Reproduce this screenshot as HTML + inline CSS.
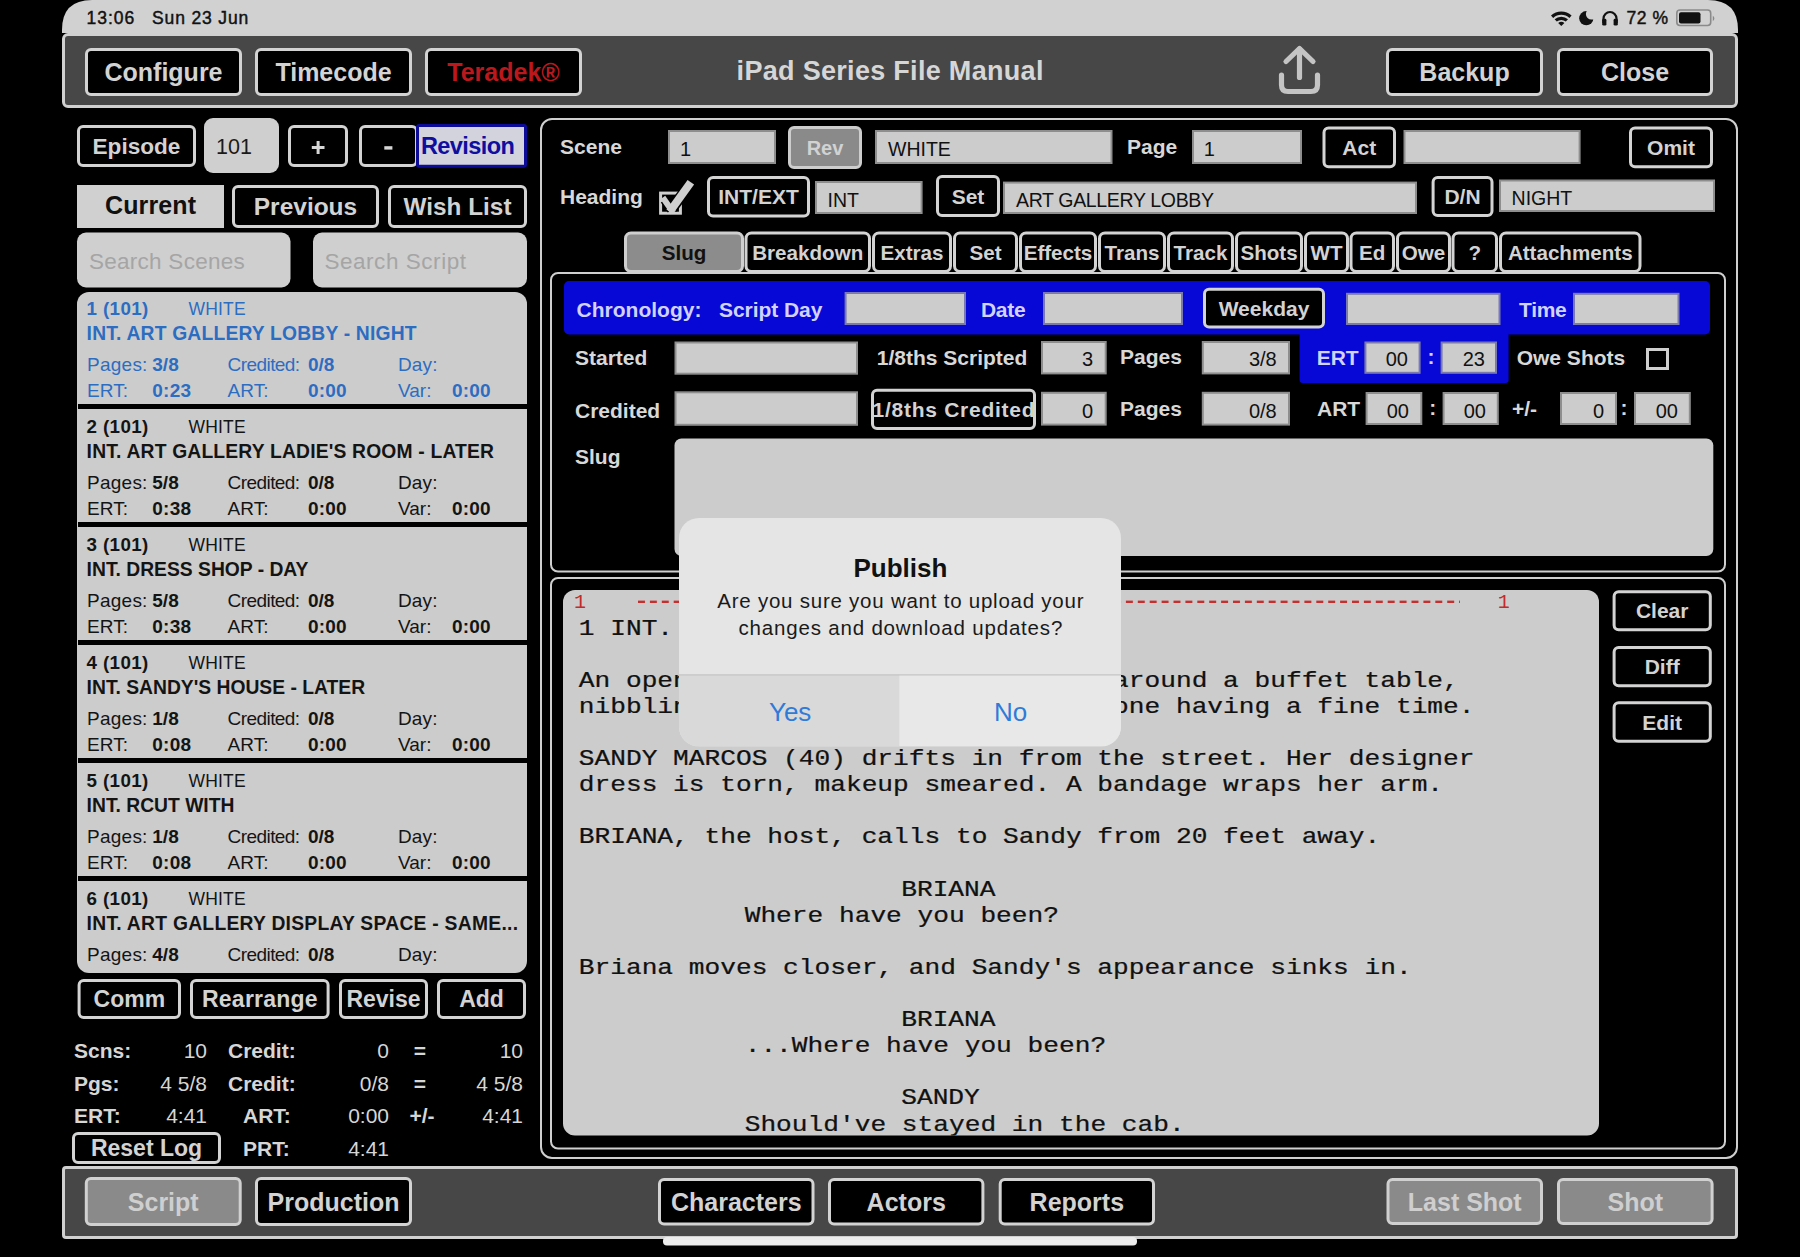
<!DOCTYPE html>
<html><head><meta charset="utf-8"><title>iPad Series File Manual</title>
<style>html,body{margin:0;padding:0;background:#000;width:1800px;height:1257px;overflow:hidden}svg{display:block}</style>
</head><body>
<svg width="1800" height="1257" viewBox="0 0 1800 1257"><defs><pattern id="dash" x="638" y="0" width="11.9" height="10" patternUnits="userSpaceOnUse"><rect x="0" y="0" width="7" height="10" fill="#c43030"/></pattern></defs><path d="M62,33 L62,30 Q62,0 92,0 L1708,0 Q1738,0 1738,30 L1738,33 Z" fill="#d1d1d1"/>
<text x="86.50" y="23.90" font-family="Liberation Sans" font-size="17.5" font-weight="400" fill="#111" text-anchor="start" textLength="47.70" lengthAdjust="spacing" stroke="#111" stroke-width="0.45">13:06</text>
<text x="152.00" y="23.90" font-family="Liberation Sans" font-size="17.5" font-weight="400" fill="#111" text-anchor="start" textLength="96.30" lengthAdjust="spacing" stroke="#111" stroke-width="0.45">Sun 23 Jun</text>
<g fill="#111"><path d="M1551,15.5 A15,15 0 0 1 1571.6,15.5 L1569.4,17.9 A12,12 0 0 0 1553.2,17.9 Z"/><path d="M1554.6,19.3 A10,10 0 0 1 1568,19.3 L1565.8,21.6 A7,7 0 0 0 1556.8,21.6 Z"/><path d="M1558.2,23 A5,5 0 0 1 1564.4,23 L1561.3,26 Z"/></g>
<mask id="moonm"><rect x="1570" y="0" width="40" height="33" fill="#fff"/><circle cx="1591.5" cy="14" r="5.6" fill="#000"/></mask><circle cx="1586.3" cy="18.2" r="7.1" fill="#111" mask="url(#moonm)"/>
<path d="M1603.5,23 L1603.5,18.5 A6.5,6.5 0 0 1 1616.5,18.5 L1616.5,23" fill="none" stroke="#111" stroke-width="2.2"/><rect x="1602.2" y="18.8" width="4.2" height="6.8" rx="1.4" fill="#111"/><rect x="1613.6" y="18.8" width="4.2" height="6.8" rx="1.4" fill="#111"/>
<text x="1626.60" y="23.50" font-family="Liberation Sans" font-size="17.5" font-weight="400" fill="#111" text-anchor="start" textLength="41.40" lengthAdjust="spacing" stroke="#111" stroke-width="0.45">72 %</text>
<rect x="1676.80" y="10.00" width="33.90" height="15.50" rx="3.20" fill="none" stroke="#8a8a8a" stroke-width="1.6" />
<rect x="1679.00" y="12.20" width="21.50" height="11.30" rx="2" fill="#111" />
<path d="M1712.8,15.8 Q1716,18.5 1712.8,21.2 Z" fill="#888"/>
<rect x="63.50" y="34.50" width="1673.00" height="72.00" rx="4.50" fill="#474747" stroke="#d0d0d0" stroke-width="3" />
<rect x="86.50" y="49.50" width="154.00" height="45.00" rx="4.50" fill="#000" stroke="#d3d3d3" stroke-width="3" />
<text x="163.50" y="81.00" font-family="Liberation Sans" font-size="25" font-weight="700" fill="#d3d3d3" text-anchor="middle" >Configure</text>
<rect x="256.50" y="49.50" width="154.00" height="45.00" rx="4.50" fill="#000" stroke="#d3d3d3" stroke-width="3" />
<text x="333.50" y="81.00" font-family="Liberation Sans" font-size="25" font-weight="700" fill="#d3d3d3" text-anchor="middle" >Timecode</text>
<rect x="426.50" y="49.50" width="154.00" height="45.00" rx="4.50" fill="#000" stroke="#d3d3d3" stroke-width="3" />
<text x="503.50" y="81.00" font-family="Liberation Sans" font-size="25" font-weight="700" fill="#bb181d" text-anchor="middle" >Teradek®</text>
<text x="736.60" y="80.00" font-family="Liberation Sans" font-size="27" font-weight="700" fill="#d6d6d6" text-anchor="start" textLength="306.80" lengthAdjust="spacing" >iPad Series File Manual</text>
<g fill="none" stroke="#c4c4c4" stroke-width="5.2" stroke-linecap="round" stroke-linejoin="round"><path d="M1299.5,49 L1299.5,77.5"/><path d="M1286,61.5 L1299.5,48.5 L1313,61.5"/><path d="M1281.5,75 L1281.5,85 Q1281.5,91.5 1288,91.5 L1311,91.5 Q1317.5,91.5 1317.5,85 L1317.5,75"/></g>
<rect x="1387.50" y="49.50" width="154.00" height="45.00" rx="4.50" fill="#000" stroke="#d3d3d3" stroke-width="3" />
<text x="1464.50" y="81.00" font-family="Liberation Sans" font-size="25" font-weight="700" fill="#d3d3d3" text-anchor="middle" >Backup</text>
<rect x="1558.50" y="49.50" width="153.00" height="45.00" rx="4.50" fill="#000" stroke="#d3d3d3" stroke-width="3" />
<text x="1635.00" y="81.00" font-family="Liberation Sans" font-size="25" font-weight="700" fill="#d3d3d3" text-anchor="middle" >Close</text>
<rect x="78.50" y="126.50" width="116.00" height="39.00" rx="4.50" fill="#000" stroke="#d3d3d3" stroke-width="3" />
<text x="136.50" y="154.14" font-family="Liberation Sans" font-size="22.6" font-weight="700" fill="#d3d3d3" text-anchor="middle" >Episode</text>
<rect x="204.00" y="118.00" width="75.00" height="55.00" rx="9" fill="#cfcfcf" />
<text x="216.00" y="154.30" font-family="Liberation Sans" font-size="21.5" font-weight="400" fill="#1a1a1a" text-anchor="start" >101</text>
<rect x="289.50" y="126.50" width="57.00" height="39.00" rx="4.50" fill="#000" stroke="#d3d3d3" stroke-width="3" />
<rect x="311.80" y="146.00" width="12.70" height="3.00" rx="0" fill="#d6d6d6" />
<rect x="316.60" y="141.00" width="3.00" height="13.00" rx="0" fill="#d6d6d6" />
<rect x="360.50" y="126.50" width="56.00" height="39.00" rx="4.50" fill="#000" stroke="#d3d3d3" stroke-width="3" />
<rect x="384.30" y="146.20" width="8.10" height="3.40" rx="0" fill="#d6d6d6" />
<rect x="417.50" y="125.50" width="108.00" height="40.70" rx="1.50" fill="#d3d3de" stroke="#0c0c98" stroke-width="3" />
<text x="420.90" y="154.00" font-family="Liberation Sans" font-size="23.5" font-weight="700" fill="#0e0ea0" text-anchor="start" textLength="94.00" lengthAdjust="spacing" >Revision</text>
<rect x="77.00" y="185.00" width="147.00" height="43.00" rx="0" fill="#d0d0d0" />
<text x="150.50" y="214.00" font-family="Liberation Sans" font-size="25" font-weight="700" fill="#111" text-anchor="middle" textLength="91.00" lengthAdjust="spacing" >Current</text>
<rect x="233.50" y="186.50" width="144.00" height="40.00" rx="4.50" fill="#000" stroke="#d3d3d3" stroke-width="3" />
<text x="305.50" y="215.32" font-family="Liberation Sans" font-size="24.5" font-weight="700" fill="#d3d3d3" text-anchor="middle" textLength="103.40" lengthAdjust="spacing" >Previous</text>
<rect x="389.50" y="186.50" width="136.00" height="40.00" rx="4.50" fill="#000" stroke="#d3d3d3" stroke-width="3" />
<text x="457.50" y="215.25" font-family="Liberation Sans" font-size="24.3" font-weight="700" fill="#d3d3d3" text-anchor="middle" textLength="108.00" lengthAdjust="spacing" >Wish List</text>
<rect x="77.00" y="232.50" width="213.50" height="55.00" rx="9" fill="#cfcfcf" />
<text x="89.00" y="268.60" font-family="Liberation Sans" font-size="22.5" font-weight="400" fill="#a5a5a5" text-anchor="start" textLength="155.70" lengthAdjust="spacing" >Search Scenes</text>
<rect x="313.00" y="232.50" width="214.00" height="55.00" rx="9" fill="#cfcfcf" />
<text x="324.40" y="268.60" font-family="Liberation Sans" font-size="22.5" font-weight="400" fill="#a5a5a5" text-anchor="start" textLength="141.60" lengthAdjust="spacing" >Search Script</text>
<clipPath id="listclip"><rect x="77" y="292" width="450" height="681" rx="12"/></clipPath>
<rect x="77.00" y="292.00" width="450.00" height="681.00" rx="12" fill="#cccccc" />
<g clip-path="url(#listclip)">
<text x="86.60" y="314.80" font-family="Liberation Sans" font-size="18.8" font-weight="700" fill="#2c6dc2" text-anchor="start" textLength="61.70" lengthAdjust="spacing" >1 (101)</text>
<text x="188.40" y="314.50" font-family="Liberation Sans" font-size="17.5" font-weight="400" fill="#2c6dc2" text-anchor="start" textLength="57.30" lengthAdjust="spacing" >WHITE</text>
<text x="86.60" y="340.00" font-family="Liberation Sans" font-size="19.3" font-weight="700" fill="#2c6dc2" text-anchor="start" textLength="330.00" lengthAdjust="spacing" >INT. ART GALLERY LOBBY - NIGHT</text>
<text x="87.00" y="371.00" font-family="Liberation Sans" font-size="19" font-weight="400" fill="#2c6dc2" text-anchor="start" textLength="60.40" lengthAdjust="spacing" >Pages:</text>
<text x="152.30" y="371.00" font-family="Liberation Sans" font-size="19" font-weight="700" fill="#2c6dc2" text-anchor="start" >3/8</text>
<text x="227.60" y="371.00" font-family="Liberation Sans" font-size="19" font-weight="400" fill="#2c6dc2" text-anchor="start" textLength="72.50" lengthAdjust="spacing" >Credited:</text>
<text x="308.00" y="371.00" font-family="Liberation Sans" font-size="19" font-weight="700" fill="#2c6dc2" text-anchor="start" >0/8</text>
<text x="398.00" y="371.00" font-family="Liberation Sans" font-size="19" font-weight="400" fill="#2c6dc2" text-anchor="start" textLength="39.50" lengthAdjust="spacing" >Day:</text>
<text x="87.00" y="396.50" font-family="Liberation Sans" font-size="19" font-weight="400" fill="#2c6dc2" text-anchor="start" textLength="41.00" lengthAdjust="spacing" >ERT:</text>
<text x="152.30" y="396.50" font-family="Liberation Sans" font-size="19" font-weight="700" fill="#2c6dc2" text-anchor="start" textLength="38.70" lengthAdjust="spacing" >0:23</text>
<text x="227.60" y="396.50" font-family="Liberation Sans" font-size="19" font-weight="400" fill="#2c6dc2" text-anchor="start" >ART:</text>
<text x="308.00" y="396.50" font-family="Liberation Sans" font-size="19" font-weight="700" fill="#2c6dc2" text-anchor="start" textLength="38.70" lengthAdjust="spacing" >0:00</text>
<text x="398.00" y="396.50" font-family="Liberation Sans" font-size="19" font-weight="400" fill="#2c6dc2" text-anchor="start" >Var:</text>
<text x="452.00" y="396.50" font-family="Liberation Sans" font-size="19" font-weight="700" fill="#2c6dc2" text-anchor="start" textLength="38.70" lengthAdjust="spacing" >0:00</text>
<rect x="78.00" y="404.00" width="449.00" height="5.00" rx="0" fill="#000" />
<text x="86.60" y="432.80" font-family="Liberation Sans" font-size="18.8" font-weight="700" fill="#141414" text-anchor="start" textLength="61.70" lengthAdjust="spacing" >2 (101)</text>
<text x="188.40" y="432.50" font-family="Liberation Sans" font-size="17.5" font-weight="400" fill="#141414" text-anchor="start" textLength="57.30" lengthAdjust="spacing" >WHITE</text>
<text x="86.60" y="458.00" font-family="Liberation Sans" font-size="19.3" font-weight="700" fill="#141414" text-anchor="start" textLength="407.40" lengthAdjust="spacing" >INT. ART GALLERY LADIE&#x27;S ROOM - LATER</text>
<text x="87.00" y="489.00" font-family="Liberation Sans" font-size="19" font-weight="400" fill="#141414" text-anchor="start" textLength="60.40" lengthAdjust="spacing" >Pages:</text>
<text x="152.30" y="489.00" font-family="Liberation Sans" font-size="19" font-weight="700" fill="#141414" text-anchor="start" >5/8</text>
<text x="227.60" y="489.00" font-family="Liberation Sans" font-size="19" font-weight="400" fill="#141414" text-anchor="start" textLength="72.50" lengthAdjust="spacing" >Credited:</text>
<text x="308.00" y="489.00" font-family="Liberation Sans" font-size="19" font-weight="700" fill="#141414" text-anchor="start" >0/8</text>
<text x="398.00" y="489.00" font-family="Liberation Sans" font-size="19" font-weight="400" fill="#141414" text-anchor="start" textLength="39.50" lengthAdjust="spacing" >Day:</text>
<text x="87.00" y="514.50" font-family="Liberation Sans" font-size="19" font-weight="400" fill="#141414" text-anchor="start" textLength="41.00" lengthAdjust="spacing" >ERT:</text>
<text x="152.30" y="514.50" font-family="Liberation Sans" font-size="19" font-weight="700" fill="#141414" text-anchor="start" textLength="38.70" lengthAdjust="spacing" >0:38</text>
<text x="227.60" y="514.50" font-family="Liberation Sans" font-size="19" font-weight="400" fill="#141414" text-anchor="start" >ART:</text>
<text x="308.00" y="514.50" font-family="Liberation Sans" font-size="19" font-weight="700" fill="#141414" text-anchor="start" textLength="38.70" lengthAdjust="spacing" >0:00</text>
<text x="398.00" y="514.50" font-family="Liberation Sans" font-size="19" font-weight="400" fill="#141414" text-anchor="start" >Var:</text>
<text x="452.00" y="514.50" font-family="Liberation Sans" font-size="19" font-weight="700" fill="#141414" text-anchor="start" textLength="38.70" lengthAdjust="spacing" >0:00</text>
<rect x="78.00" y="522.00" width="449.00" height="5.00" rx="0" fill="#000" />
<text x="86.60" y="550.80" font-family="Liberation Sans" font-size="18.8" font-weight="700" fill="#141414" text-anchor="start" textLength="61.70" lengthAdjust="spacing" >3 (101)</text>
<text x="188.40" y="550.50" font-family="Liberation Sans" font-size="17.5" font-weight="400" fill="#141414" text-anchor="start" textLength="57.30" lengthAdjust="spacing" >WHITE</text>
<text x="86.60" y="576.00" font-family="Liberation Sans" font-size="19.3" font-weight="700" fill="#141414" text-anchor="start" >INT. DRESS SHOP - DAY</text>
<text x="87.00" y="607.00" font-family="Liberation Sans" font-size="19" font-weight="400" fill="#141414" text-anchor="start" textLength="60.40" lengthAdjust="spacing" >Pages:</text>
<text x="152.30" y="607.00" font-family="Liberation Sans" font-size="19" font-weight="700" fill="#141414" text-anchor="start" >5/8</text>
<text x="227.60" y="607.00" font-family="Liberation Sans" font-size="19" font-weight="400" fill="#141414" text-anchor="start" textLength="72.50" lengthAdjust="spacing" >Credited:</text>
<text x="308.00" y="607.00" font-family="Liberation Sans" font-size="19" font-weight="700" fill="#141414" text-anchor="start" >0/8</text>
<text x="398.00" y="607.00" font-family="Liberation Sans" font-size="19" font-weight="400" fill="#141414" text-anchor="start" textLength="39.50" lengthAdjust="spacing" >Day:</text>
<text x="87.00" y="632.50" font-family="Liberation Sans" font-size="19" font-weight="400" fill="#141414" text-anchor="start" textLength="41.00" lengthAdjust="spacing" >ERT:</text>
<text x="152.30" y="632.50" font-family="Liberation Sans" font-size="19" font-weight="700" fill="#141414" text-anchor="start" textLength="38.70" lengthAdjust="spacing" >0:38</text>
<text x="227.60" y="632.50" font-family="Liberation Sans" font-size="19" font-weight="400" fill="#141414" text-anchor="start" >ART:</text>
<text x="308.00" y="632.50" font-family="Liberation Sans" font-size="19" font-weight="700" fill="#141414" text-anchor="start" textLength="38.70" lengthAdjust="spacing" >0:00</text>
<text x="398.00" y="632.50" font-family="Liberation Sans" font-size="19" font-weight="400" fill="#141414" text-anchor="start" >Var:</text>
<text x="452.00" y="632.50" font-family="Liberation Sans" font-size="19" font-weight="700" fill="#141414" text-anchor="start" textLength="38.70" lengthAdjust="spacing" >0:00</text>
<rect x="78.00" y="640.00" width="449.00" height="5.00" rx="0" fill="#000" />
<text x="86.60" y="668.80" font-family="Liberation Sans" font-size="18.8" font-weight="700" fill="#141414" text-anchor="start" textLength="61.70" lengthAdjust="spacing" >4 (101)</text>
<text x="188.40" y="668.50" font-family="Liberation Sans" font-size="17.5" font-weight="400" fill="#141414" text-anchor="start" textLength="57.30" lengthAdjust="spacing" >WHITE</text>
<text x="86.60" y="694.00" font-family="Liberation Sans" font-size="19.3" font-weight="700" fill="#141414" text-anchor="start" >INT. SANDY&#x27;S HOUSE - LATER</text>
<text x="87.00" y="725.00" font-family="Liberation Sans" font-size="19" font-weight="400" fill="#141414" text-anchor="start" textLength="60.40" lengthAdjust="spacing" >Pages:</text>
<text x="152.30" y="725.00" font-family="Liberation Sans" font-size="19" font-weight="700" fill="#141414" text-anchor="start" >1/8</text>
<text x="227.60" y="725.00" font-family="Liberation Sans" font-size="19" font-weight="400" fill="#141414" text-anchor="start" textLength="72.50" lengthAdjust="spacing" >Credited:</text>
<text x="308.00" y="725.00" font-family="Liberation Sans" font-size="19" font-weight="700" fill="#141414" text-anchor="start" >0/8</text>
<text x="398.00" y="725.00" font-family="Liberation Sans" font-size="19" font-weight="400" fill="#141414" text-anchor="start" textLength="39.50" lengthAdjust="spacing" >Day:</text>
<text x="87.00" y="750.50" font-family="Liberation Sans" font-size="19" font-weight="400" fill="#141414" text-anchor="start" textLength="41.00" lengthAdjust="spacing" >ERT:</text>
<text x="152.30" y="750.50" font-family="Liberation Sans" font-size="19" font-weight="700" fill="#141414" text-anchor="start" textLength="38.70" lengthAdjust="spacing" >0:08</text>
<text x="227.60" y="750.50" font-family="Liberation Sans" font-size="19" font-weight="400" fill="#141414" text-anchor="start" >ART:</text>
<text x="308.00" y="750.50" font-family="Liberation Sans" font-size="19" font-weight="700" fill="#141414" text-anchor="start" textLength="38.70" lengthAdjust="spacing" >0:00</text>
<text x="398.00" y="750.50" font-family="Liberation Sans" font-size="19" font-weight="400" fill="#141414" text-anchor="start" >Var:</text>
<text x="452.00" y="750.50" font-family="Liberation Sans" font-size="19" font-weight="700" fill="#141414" text-anchor="start" textLength="38.70" lengthAdjust="spacing" >0:00</text>
<rect x="78.00" y="758.00" width="449.00" height="5.00" rx="0" fill="#000" />
<text x="86.60" y="786.80" font-family="Liberation Sans" font-size="18.8" font-weight="700" fill="#141414" text-anchor="start" textLength="61.70" lengthAdjust="spacing" >5 (101)</text>
<text x="188.40" y="786.50" font-family="Liberation Sans" font-size="17.5" font-weight="400" fill="#141414" text-anchor="start" textLength="57.30" lengthAdjust="spacing" >WHITE</text>
<text x="86.60" y="812.00" font-family="Liberation Sans" font-size="19.3" font-weight="700" fill="#141414" text-anchor="start" >INT. RCUT WITH</text>
<text x="87.00" y="843.00" font-family="Liberation Sans" font-size="19" font-weight="400" fill="#141414" text-anchor="start" textLength="60.40" lengthAdjust="spacing" >Pages:</text>
<text x="152.30" y="843.00" font-family="Liberation Sans" font-size="19" font-weight="700" fill="#141414" text-anchor="start" >1/8</text>
<text x="227.60" y="843.00" font-family="Liberation Sans" font-size="19" font-weight="400" fill="#141414" text-anchor="start" textLength="72.50" lengthAdjust="spacing" >Credited:</text>
<text x="308.00" y="843.00" font-family="Liberation Sans" font-size="19" font-weight="700" fill="#141414" text-anchor="start" >0/8</text>
<text x="398.00" y="843.00" font-family="Liberation Sans" font-size="19" font-weight="400" fill="#141414" text-anchor="start" textLength="39.50" lengthAdjust="spacing" >Day:</text>
<text x="87.00" y="868.50" font-family="Liberation Sans" font-size="19" font-weight="400" fill="#141414" text-anchor="start" textLength="41.00" lengthAdjust="spacing" >ERT:</text>
<text x="152.30" y="868.50" font-family="Liberation Sans" font-size="19" font-weight="700" fill="#141414" text-anchor="start" textLength="38.70" lengthAdjust="spacing" >0:08</text>
<text x="227.60" y="868.50" font-family="Liberation Sans" font-size="19" font-weight="400" fill="#141414" text-anchor="start" >ART:</text>
<text x="308.00" y="868.50" font-family="Liberation Sans" font-size="19" font-weight="700" fill="#141414" text-anchor="start" textLength="38.70" lengthAdjust="spacing" >0:00</text>
<text x="398.00" y="868.50" font-family="Liberation Sans" font-size="19" font-weight="400" fill="#141414" text-anchor="start" >Var:</text>
<text x="452.00" y="868.50" font-family="Liberation Sans" font-size="19" font-weight="700" fill="#141414" text-anchor="start" textLength="38.70" lengthAdjust="spacing" >0:00</text>
<rect x="78.00" y="876.00" width="449.00" height="5.00" rx="0" fill="#000" />
<text x="86.60" y="904.80" font-family="Liberation Sans" font-size="18.8" font-weight="700" fill="#141414" text-anchor="start" textLength="61.70" lengthAdjust="spacing" >6 (101)</text>
<text x="188.40" y="904.50" font-family="Liberation Sans" font-size="17.5" font-weight="400" fill="#141414" text-anchor="start" textLength="57.30" lengthAdjust="spacing" >WHITE</text>
<text x="86.60" y="930.00" font-family="Liberation Sans" font-size="19.3" font-weight="700" fill="#141414" text-anchor="start" textLength="431.40" lengthAdjust="spacing" >INT. ART GALLERY DISPLAY SPACE - SAME...</text>
<text x="87.00" y="961.00" font-family="Liberation Sans" font-size="19" font-weight="400" fill="#141414" text-anchor="start" textLength="60.40" lengthAdjust="spacing" >Pages:</text>
<text x="152.30" y="961.00" font-family="Liberation Sans" font-size="19" font-weight="700" fill="#141414" text-anchor="start" >4/8</text>
<text x="227.60" y="961.00" font-family="Liberation Sans" font-size="19" font-weight="400" fill="#141414" text-anchor="start" textLength="72.50" lengthAdjust="spacing" >Credited:</text>
<text x="308.00" y="961.00" font-family="Liberation Sans" font-size="19" font-weight="700" fill="#141414" text-anchor="start" >0/8</text>
<text x="398.00" y="961.00" font-family="Liberation Sans" font-size="19" font-weight="400" fill="#141414" text-anchor="start" textLength="39.50" lengthAdjust="spacing" >Day:</text>
<text x="87.00" y="986.50" font-family="Liberation Sans" font-size="19" font-weight="400" fill="#141414" text-anchor="start" textLength="41.00" lengthAdjust="spacing" >ERT:</text>
<text x="152.30" y="986.50" font-family="Liberation Sans" font-size="19" font-weight="700" fill="#141414" text-anchor="start" textLength="38.70" lengthAdjust="spacing" >0:08</text>
<text x="227.60" y="986.50" font-family="Liberation Sans" font-size="19" font-weight="400" fill="#141414" text-anchor="start" >ART:</text>
<text x="308.00" y="986.50" font-family="Liberation Sans" font-size="19" font-weight="700" fill="#141414" text-anchor="start" textLength="38.70" lengthAdjust="spacing" >0:00</text>
<text x="398.00" y="986.50" font-family="Liberation Sans" font-size="19" font-weight="400" fill="#141414" text-anchor="start" >Var:</text>
<text x="452.00" y="986.50" font-family="Liberation Sans" font-size="19" font-weight="700" fill="#141414" text-anchor="start" textLength="38.70" lengthAdjust="spacing" >0:00</text>
</g>
<rect x="79.10" y="980.50" width="100.40" height="37.00" rx="4.50" fill="#000" stroke="#d3d3d3" stroke-width="3" />
<text x="129.30" y="1007.28" font-family="Liberation Sans" font-size="23" font-weight="700" fill="#d3d3d3" text-anchor="middle" >Comm</text>
<rect x="191.50" y="980.50" width="136.60" height="37.00" rx="4.50" fill="#000" stroke="#d3d3d3" stroke-width="3" />
<text x="259.80" y="1007.28" font-family="Liberation Sans" font-size="23" font-weight="700" fill="#d3d3d3" text-anchor="middle" textLength="115.60" lengthAdjust="spacing" >Rearrange</text>
<rect x="340.50" y="980.50" width="86.00" height="37.00" rx="4.50" fill="#000" stroke="#d3d3d3" stroke-width="3" />
<text x="383.50" y="1007.28" font-family="Liberation Sans" font-size="23" font-weight="700" fill="#d3d3d3" text-anchor="middle" >Revise</text>
<rect x="438.50" y="980.50" width="86.00" height="37.00" rx="4.50" fill="#000" stroke="#d3d3d3" stroke-width="3" />
<text x="481.50" y="1007.28" font-family="Liberation Sans" font-size="23" font-weight="700" fill="#d3d3d3" text-anchor="middle" >Add</text>
<text x="74.00" y="1058.00" font-family="Liberation Sans" font-size="21" font-weight="700" fill="#d6d6d6" text-anchor="start" >Scns:</text>
<text x="207.00" y="1058.00" font-family="Liberation Sans" font-size="21" font-weight="400" fill="#d6d6d6" text-anchor="end" >10</text>
<text x="228.00" y="1058.00" font-family="Liberation Sans" font-size="21" font-weight="700" fill="#d6d6d6" text-anchor="start" >Credit:</text>
<text x="389.00" y="1058.00" font-family="Liberation Sans" font-size="21" font-weight="400" fill="#d6d6d6" text-anchor="end" >0</text>
<text x="420.00" y="1058.00" font-family="Liberation Sans" font-size="21" font-weight="700" fill="#d6d6d6" text-anchor="middle" >=</text>
<text x="523.00" y="1058.00" font-family="Liberation Sans" font-size="21" font-weight="400" fill="#d6d6d6" text-anchor="end" >10</text>
<text x="74.00" y="1090.60" font-family="Liberation Sans" font-size="21" font-weight="700" fill="#d6d6d6" text-anchor="start" >Pgs:</text>
<text x="207.00" y="1090.60" font-family="Liberation Sans" font-size="21" font-weight="400" fill="#d6d6d6" text-anchor="end" >4 5/8</text>
<text x="228.00" y="1090.60" font-family="Liberation Sans" font-size="21" font-weight="700" fill="#d6d6d6" text-anchor="start" >Credit:</text>
<text x="389.00" y="1090.60" font-family="Liberation Sans" font-size="21" font-weight="400" fill="#d6d6d6" text-anchor="end" >0/8</text>
<text x="420.00" y="1090.60" font-family="Liberation Sans" font-size="21" font-weight="700" fill="#d6d6d6" text-anchor="middle" >=</text>
<text x="523.00" y="1090.60" font-family="Liberation Sans" font-size="21" font-weight="400" fill="#d6d6d6" text-anchor="end" >4 5/8</text>
<text x="74.00" y="1123.00" font-family="Liberation Sans" font-size="21" font-weight="700" fill="#d6d6d6" text-anchor="start" >ERT:</text>
<text x="207.00" y="1123.00" font-family="Liberation Sans" font-size="21" font-weight="400" fill="#d6d6d6" text-anchor="end" >4:41</text>
<text x="243.00" y="1123.00" font-family="Liberation Sans" font-size="21" font-weight="700" fill="#d6d6d6" text-anchor="start" >ART:</text>
<text x="389.00" y="1123.00" font-family="Liberation Sans" font-size="21" font-weight="400" fill="#d6d6d6" text-anchor="end" >0:00</text>
<text x="422.00" y="1123.00" font-family="Liberation Sans" font-size="21" font-weight="700" fill="#d6d6d6" text-anchor="middle" >+/-</text>
<text x="523.00" y="1123.00" font-family="Liberation Sans" font-size="21" font-weight="400" fill="#d6d6d6" text-anchor="end" >4:41</text>
<rect x="73.50" y="1133.50" width="146.00" height="29.00" rx="4.50" fill="#000" stroke="#d3d3d3" stroke-width="3" />
<text x="146.50" y="1156.28" font-family="Liberation Sans" font-size="23" font-weight="700" fill="#d3d3d3" text-anchor="middle" >Reset Log</text>
<text x="243.00" y="1156.00" font-family="Liberation Sans" font-size="21" font-weight="700" fill="#d6d6d6" text-anchor="start" >PRT:</text>
<text x="389.00" y="1156.00" font-family="Liberation Sans" font-size="21" font-weight="400" fill="#d6d6d6" text-anchor="end" >4:41</text>
<rect x="541.00" y="119.00" width="1196.00" height="1039.00" rx="11.00" fill="none" stroke="#cfcfcf" stroke-width="2" />
<text x="560.00" y="154.00" font-family="Liberation Sans" font-size="21" font-weight="700" fill="#d8d8d8" text-anchor="start" textLength="62.00" lengthAdjust="spacing" >Scene</text>
<rect x="669.00" y="131.00" width="106.00" height="32.00" rx="0.00" fill="#cccccc" stroke="#8e8e8e" stroke-width="2" />
<text x="680.00" y="156.00" font-family="Liberation Sans" font-size="20" font-weight="400" fill="#111" text-anchor="start" >1</text>
<rect x="789.50" y="127.50" width="71.00" height="40.00" rx="4.50" fill="#8a8a8a" stroke="#cdcdcd" stroke-width="3" />
<text x="825.00" y="154.70" font-family="Liberation Sans" font-size="20" font-weight="700" fill="#d2d2d2" text-anchor="middle" >Rev</text>
<rect x="876.00" y="131.00" width="235.50" height="32.00" rx="0.00" fill="#cccccc" stroke="#8e8e8e" stroke-width="2" />
<text x="888.00" y="156.00" font-family="Liberation Sans" font-size="19.5" font-weight="400" fill="#111" text-anchor="start" >WHITE</text>
<text x="1127.00" y="154.00" font-family="Liberation Sans" font-size="21" font-weight="700" fill="#d8d8d8" text-anchor="start" >Page</text>
<rect x="1193.00" y="131.00" width="108.00" height="32.00" rx="0.00" fill="#cccccc" stroke="#8e8e8e" stroke-width="2" />
<text x="1203.70" y="156.00" font-family="Liberation Sans" font-size="20" font-weight="400" fill="#111" text-anchor="start" >1</text>
<rect x="1324.00" y="128.10" width="70.50" height="38.70" rx="4.50" fill="#000" stroke="#d3d3d3" stroke-width="3" />
<text x="1359.25" y="155.01" font-family="Liberation Sans" font-size="21" font-weight="700" fill="#d3d3d3" text-anchor="middle" >Act</text>
<rect x="1404.50" y="131.00" width="175.10" height="32.00" rx="0.00" fill="#cccccc" stroke="#8e8e8e" stroke-width="2" />
<rect x="1630.50" y="128.10" width="81.00" height="38.70" rx="4.50" fill="#000" stroke="#d3d3d3" stroke-width="3" />
<text x="1671.00" y="155.01" font-family="Liberation Sans" font-size="21" font-weight="700" fill="#d3d3d3" text-anchor="middle" >Omit</text>
<text x="560.00" y="204.00" font-family="Liberation Sans" font-size="21" font-weight="700" fill="#d8d8d8" text-anchor="start" >Heading</text>
<rect x="660.6" y="193.1" width="19.8" height="20.1" fill="none" stroke="#cfcfcf" stroke-width="3"/><path d="M664.5,200 L671.5,210" stroke="#000" stroke-width="9" fill="none"/><path d="M672,208.5 L689,185.5" stroke="#000" stroke-width="11" fill="none"/><path d="M664.5,200 L671.5,210" stroke="#cfcfcf" stroke-width="6" fill="none" stroke-linecap="square"/><path d="M672,208.5 L688.5,185.5" stroke="#cfcfcf" stroke-width="8" fill="none" stroke-linecap="square"/>
<rect x="708.50" y="177.50" width="100.00" height="38.60" rx="4.50" fill="#000" stroke="#d3d3d3" stroke-width="3" />
<text x="758.50" y="204.36" font-family="Liberation Sans" font-size="21" font-weight="700" fill="#d3d3d3" text-anchor="middle" >INT/EXT</text>
<rect x="816.00" y="182.00" width="105.60" height="31.00" rx="0.00" fill="#cccccc" stroke="#8e8e8e" stroke-width="2" />
<text x="827.60" y="207.00" font-family="Liberation Sans" font-size="19.5" font-weight="400" fill="#111" text-anchor="start" >INT</text>
<rect x="937.50" y="176.50" width="61.00" height="39.00" rx="4.50" fill="#000" stroke="#d3d3d3" stroke-width="3" />
<text x="968.00" y="203.56" font-family="Liberation Sans" font-size="21" font-weight="700" fill="#d3d3d3" text-anchor="middle" >Set</text>
<rect x="1004.00" y="182.60" width="412.00" height="30.40" rx="0.00" fill="#cccccc" stroke="#8e8e8e" stroke-width="2" />
<text x="1016.00" y="207.00" font-family="Liberation Sans" font-size="19.5" font-weight="400" fill="#111" text-anchor="start" textLength="198.00" lengthAdjust="spacing" >ART GALLERY LOBBY</text>
<rect x="1433.10" y="177.50" width="58.90" height="38.00" rx="4.50" fill="#000" stroke="#d3d3d3" stroke-width="3" />
<text x="1462.55" y="204.06" font-family="Liberation Sans" font-size="21" font-weight="700" fill="#d3d3d3" text-anchor="middle" >D/N</text>
<rect x="1500.00" y="180.50" width="214.00" height="30.50" rx="0.00" fill="#cccccc" stroke="#8e8e8e" stroke-width="2" />
<text x="1511.60" y="205.00" font-family="Liberation Sans" font-size="19.5" font-weight="400" fill="#111" text-anchor="start" >NIGHT</text>
<rect x="551.00" y="273.00" width="1174.00" height="298.50" rx="7.00" fill="none" stroke="#cfcfcf" stroke-width="2" />
<rect x="625.50" y="233.00" width="117.00" height="38.50" rx="5.50" fill="#8c8c8c" stroke="#cfcfcf" stroke-width="3" />
<text x="684.00" y="259.67" font-family="Liberation Sans" font-size="20.6" font-weight="700" fill="#111" text-anchor="middle" >Slug</text>
<rect x="746.00" y="233.00" width="123.50" height="38.50" rx="5.50" fill="#000" stroke="#d3d3d3" stroke-width="3" />
<text x="807.75" y="259.67" font-family="Liberation Sans" font-size="20.6" font-weight="700" fill="#d3d3d3" text-anchor="middle" >Breakdown</text>
<rect x="873.50" y="233.00" width="77.00" height="38.50" rx="5.50" fill="#000" stroke="#d3d3d3" stroke-width="3" />
<text x="912.00" y="259.67" font-family="Liberation Sans" font-size="20.6" font-weight="700" fill="#d3d3d3" text-anchor="middle" >Extras</text>
<rect x="954.50" y="233.00" width="62.00" height="38.50" rx="5.50" fill="#000" stroke="#d3d3d3" stroke-width="3" />
<text x="985.50" y="259.67" font-family="Liberation Sans" font-size="20.6" font-weight="700" fill="#d3d3d3" text-anchor="middle" >Set</text>
<rect x="1020.50" y="233.00" width="75.00" height="38.50" rx="5.50" fill="#000" stroke="#d3d3d3" stroke-width="3" />
<text x="1058.00" y="259.67" font-family="Liberation Sans" font-size="20.6" font-weight="700" fill="#d3d3d3" text-anchor="middle" >Effects</text>
<rect x="1099.50" y="233.00" width="65.00" height="38.50" rx="5.50" fill="#000" stroke="#d3d3d3" stroke-width="3" />
<text x="1132.00" y="259.67" font-family="Liberation Sans" font-size="20.6" font-weight="700" fill="#d3d3d3" text-anchor="middle" >Trans</text>
<rect x="1168.50" y="233.00" width="64.00" height="38.50" rx="5.50" fill="#000" stroke="#d3d3d3" stroke-width="3" />
<text x="1200.50" y="259.67" font-family="Liberation Sans" font-size="20.6" font-weight="700" fill="#d3d3d3" text-anchor="middle" >Track</text>
<rect x="1236.50" y="233.00" width="65.00" height="38.50" rx="5.50" fill="#000" stroke="#d3d3d3" stroke-width="3" />
<text x="1269.00" y="259.67" font-family="Liberation Sans" font-size="20.6" font-weight="700" fill="#d3d3d3" text-anchor="middle" >Shots</text>
<rect x="1305.50" y="233.00" width="42.00" height="38.50" rx="5.50" fill="#000" stroke="#d3d3d3" stroke-width="3" />
<text x="1326.50" y="259.67" font-family="Liberation Sans" font-size="20.6" font-weight="700" fill="#d3d3d3" text-anchor="middle" >WT</text>
<rect x="1351.00" y="233.00" width="42.50" height="38.50" rx="5.50" fill="#000" stroke="#d3d3d3" stroke-width="3" />
<text x="1372.25" y="259.67" font-family="Liberation Sans" font-size="20.6" font-weight="700" fill="#d3d3d3" text-anchor="middle" >Ed</text>
<rect x="1397.50" y="233.00" width="52.00" height="38.50" rx="5.50" fill="#000" stroke="#d3d3d3" stroke-width="3" />
<text x="1423.50" y="259.67" font-family="Liberation Sans" font-size="20.6" font-weight="700" fill="#d3d3d3" text-anchor="middle" >Owe</text>
<rect x="1453.00" y="233.00" width="43.50" height="38.50" rx="5.50" fill="#000" stroke="#d3d3d3" stroke-width="3" />
<text x="1474.75" y="259.67" font-family="Liberation Sans" font-size="20.6" font-weight="700" fill="#d3d3d3" text-anchor="middle" >?</text>
<rect x="1500.50" y="233.00" width="139.50" height="38.50" rx="5.50" fill="#000" stroke="#d3d3d3" stroke-width="3" />
<text x="1570.25" y="259.67" font-family="Liberation Sans" font-size="20.6" font-weight="700" fill="#d3d3d3" text-anchor="middle" >Attachments</text>
<rect x="564.00" y="281.00" width="1146.00" height="53.50" rx="5" fill="#0808d6" />
<rect x="1299.60" y="330.00" width="209.00" height="53.00" rx="3" fill="#0808d6" />
<text x="576.50" y="316.60" font-family="Liberation Sans" font-size="21" font-weight="700" fill="#d2d2ff" text-anchor="start" textLength="125.00" lengthAdjust="spacing" >Chronology:</text>
<text x="719.00" y="316.60" font-family="Liberation Sans" font-size="21" font-weight="700" fill="#d2d2ff" text-anchor="start" textLength="103.40" lengthAdjust="spacing" >Script Day</text>
<rect x="845.60" y="293.00" width="119.40" height="31.00" rx="0.00" fill="#cccccc" stroke="#7a7ab0" stroke-width="2" />
<text x="981.00" y="316.60" font-family="Liberation Sans" font-size="21" font-weight="700" fill="#d2d2ff" text-anchor="start" textLength="44.60" lengthAdjust="spacing" >Date</text>
<rect x="1044.00" y="293.00" width="138.00" height="31.00" rx="0.00" fill="#cccccc" stroke="#7a7ab0" stroke-width="2" />
<rect x="1204.50" y="289.20" width="119.00" height="37.90" rx="4.50" fill="#000" stroke="#d3d3d3" stroke-width="3" />
<text x="1264.00" y="315.71" font-family="Liberation Sans" font-size="21" font-weight="700" fill="#d3d3d3" text-anchor="middle" >Weekday</text>
<rect x="1347.00" y="293.80" width="152.50" height="30.20" rx="0.00" fill="#cccccc" stroke="#7a7ab0" stroke-width="2" />
<text x="1519.00" y="316.60" font-family="Liberation Sans" font-size="21" font-weight="700" fill="#d2d2ff" text-anchor="start" textLength="47.80" lengthAdjust="spacing" >Time</text>
<rect x="1574.00" y="293.80" width="104.50" height="30.20" rx="0.00" fill="#cccccc" stroke="#7a7ab0" stroke-width="2" />
<text x="575.00" y="365.00" font-family="Liberation Sans" font-size="21" font-weight="700" fill="#d8d8d8" text-anchor="start" >Started</text>
<rect x="675.50" y="342.50" width="181.50" height="31.20" rx="0.00" fill="#cccccc" stroke="#8e8e8e" stroke-width="2" />
<text x="876.70" y="365.00" font-family="Liberation Sans" font-size="21" font-weight="700" fill="#d8d8d8" text-anchor="start" textLength="150.60" lengthAdjust="spacing" >1/8ths Scripted</text>
<rect x="1042.00" y="342.00" width="63.70" height="31.40" rx="0.00" fill="#cccccc" stroke="#8e8e8e" stroke-width="2" />
<text x="1093.00" y="366.00" font-family="Liberation Sans" font-size="20" font-weight="400" fill="#111" text-anchor="end" >3</text>
<text x="1120.00" y="364.40" font-family="Liberation Sans" font-size="21" font-weight="700" fill="#d8d8d8" text-anchor="start" >Pages</text>
<rect x="1202.80" y="342.00" width="86.20" height="31.40" rx="0.00" fill="#cccccc" stroke="#8e8e8e" stroke-width="2" />
<text x="1276.70" y="366.00" font-family="Liberation Sans" font-size="20" font-weight="400" fill="#111" text-anchor="end" >3/8</text>
<text x="1316.70" y="365.00" font-family="Liberation Sans" font-size="21" font-weight="700" fill="#d2d2ff" text-anchor="start" >ERT</text>
<rect x="1365.40" y="342.50" width="54.20" height="30.30" rx="0.00" fill="#cccccc" stroke="#7a7ab0" stroke-width="2" />
<text x="1408.00" y="366.00" font-family="Liberation Sans" font-size="20" font-weight="400" fill="#111" text-anchor="end" >00</text>
<text x="1431.00" y="364.00" font-family="Liberation Sans" font-size="21" font-weight="700" fill="#d2d2ff" text-anchor="middle" >:</text>
<rect x="1441.60" y="342.50" width="54.40" height="30.30" rx="0.00" fill="#cccccc" stroke="#7a7ab0" stroke-width="2" />
<text x="1485.00" y="366.00" font-family="Liberation Sans" font-size="20" font-weight="400" fill="#111" text-anchor="end" >23</text>
<text x="1516.70" y="365.00" font-family="Liberation Sans" font-size="21" font-weight="700" fill="#d8d8d8" text-anchor="start" >Owe Shots</text>
<rect x="1647.50" y="349.50" width="20.00" height="19.00" rx="0.00" fill="none" stroke="#cfcfcf" stroke-width="3" />
<text x="575.00" y="417.70" font-family="Liberation Sans" font-size="21" font-weight="700" fill="#d8d8d8" text-anchor="start" >Credited</text>
<rect x="675.50" y="392.30" width="181.50" height="32.50" rx="0.00" fill="#cccccc" stroke="#8e8e8e" stroke-width="2" />
<rect x="872.50" y="390.30" width="162.00" height="38.20" rx="4.50" fill="#000" stroke="#d3d3d3" stroke-width="3" />
<text x="953.50" y="416.96" font-family="Liberation Sans" font-size="21" font-weight="700" fill="#d3d3d3" text-anchor="middle" textLength="162.00" lengthAdjust="spacing" >1/8ths Credited</text>
<rect x="1042.00" y="392.80" width="63.70" height="31.80" rx="0.00" fill="#cccccc" stroke="#8e8e8e" stroke-width="2" />
<text x="1093.00" y="417.50" font-family="Liberation Sans" font-size="20" font-weight="400" fill="#111" text-anchor="end" >0</text>
<text x="1120.00" y="416.00" font-family="Liberation Sans" font-size="21" font-weight="700" fill="#d8d8d8" text-anchor="start" >Pages</text>
<rect x="1202.80" y="392.80" width="86.20" height="31.80" rx="0.00" fill="#cccccc" stroke="#8e8e8e" stroke-width="2" />
<text x="1276.70" y="417.50" font-family="Liberation Sans" font-size="20" font-weight="400" fill="#111" text-anchor="end" >0/8</text>
<text x="1317.00" y="416.00" font-family="Liberation Sans" font-size="21" font-weight="700" fill="#d8d8d8" text-anchor="start" >ART</text>
<rect x="1366.60" y="393.00" width="54.70" height="31.00" rx="0.00" fill="#cccccc" stroke="#8e8e8e" stroke-width="2" />
<text x="1409.00" y="417.50" font-family="Liberation Sans" font-size="20" font-weight="400" fill="#111" text-anchor="end" >00</text>
<text x="1432.80" y="415.00" font-family="Liberation Sans" font-size="21" font-weight="700" fill="#d8d8d8" text-anchor="middle" >:</text>
<rect x="1443.60" y="393.00" width="54.20" height="31.00" rx="0.00" fill="#cccccc" stroke="#8e8e8e" stroke-width="2" />
<text x="1486.00" y="417.50" font-family="Liberation Sans" font-size="20" font-weight="400" fill="#111" text-anchor="end" >00</text>
<text x="1512.00" y="416.00" font-family="Liberation Sans" font-size="21" font-weight="700" fill="#d8d8d8" text-anchor="start" >+/-</text>
<rect x="1561.00" y="393.00" width="55.00" height="31.00" rx="0.00" fill="#cccccc" stroke="#8e8e8e" stroke-width="2" />
<text x="1604.00" y="417.50" font-family="Liberation Sans" font-size="20" font-weight="400" fill="#111" text-anchor="end" >0</text>
<text x="1624.00" y="415.00" font-family="Liberation Sans" font-size="21" font-weight="700" fill="#d8d8d8" text-anchor="middle" >:</text>
<rect x="1635.00" y="393.00" width="54.80" height="31.00" rx="0.00" fill="#cccccc" stroke="#8e8e8e" stroke-width="2" />
<text x="1678.00" y="417.50" font-family="Liberation Sans" font-size="20" font-weight="400" fill="#111" text-anchor="end" >00</text>
<text x="575.00" y="464.00" font-family="Liberation Sans" font-size="21" font-weight="700" fill="#d8d8d8" text-anchor="start" >Slug</text>
<rect x="674.50" y="438.50" width="1038.80" height="117.50" rx="7" fill="#cccccc" />
<rect x="551.00" y="578.00" width="1174.00" height="570.50" rx="7.00" fill="none" stroke="#cfcfcf" stroke-width="2" />
<clipPath id="scriptclip"><rect x="563" y="590" width="1036" height="545.5" rx="12"/></clipPath>
<rect x="563.00" y="590.00" width="1036.00" height="545.50" rx="12" fill="#cccccc" />
<g clip-path="url(#scriptclip)">
<text x="574.00" y="608.00" font-family="Liberation Mono" font-size="20" font-weight="400" fill="#c42a2a" text-anchor="start" >1</text>
<rect x="638" y="600.6" width="822" height="2.4" fill="url(#dash)"/>
<text x="1497.80" y="608.00" font-family="Liberation Mono" font-size="20" font-weight="400" fill="#c42a2a" text-anchor="start" >1</text>
<text x="578.80" y="0" transform="translate(0,634.60) scale(1,0.86)" font-family="Liberation Mono" font-size="26.2" fill="#111" stroke="#111" stroke-width="0.28" letter-spacing="0.000" xml:space="preserve">1 INT. ART GALLERY LOBBY - NIGHT</text>
<text x="578.80" y="0" transform="translate(0,686.80) scale(1,0.86)" font-family="Liberation Mono" font-size="26.2" fill="#111" stroke="#111" stroke-width="0.28" letter-spacing="0.000" xml:space="preserve">An opening reception. Guests mill around a buffet table,</text>
<text x="578.80" y="0" transform="translate(0,712.90) scale(1,0.86)" font-family="Liberation Mono" font-size="26.2" fill="#111" stroke="#111" stroke-width="0.28" letter-spacing="0.000" xml:space="preserve">nibbling hors d&#x27;oeuvres, and everyone having a fine time.</text>
<text x="578.80" y="0" transform="translate(0,765.10) scale(1,0.86)" font-family="Liberation Mono" font-size="26.2" fill="#111" stroke="#111" stroke-width="0.28" letter-spacing="0.000" xml:space="preserve">SANDY MARCOS (40) drifts in from the street. Her designer</text>
<text x="578.80" y="0" transform="translate(0,791.20) scale(1,0.86)" font-family="Liberation Mono" font-size="26.2" fill="#111" stroke="#111" stroke-width="0.28" letter-spacing="0.000" xml:space="preserve">dress is torn, makeup smeared. A bandage wraps her arm.</text>
<text x="578.80" y="0" transform="translate(0,843.40) scale(1,0.86)" font-family="Liberation Mono" font-size="26.2" fill="#111" stroke="#111" stroke-width="0.28" letter-spacing="0.000" xml:space="preserve">BRIANA, the host, calls to Sandy from 20 feet away.</text>
<text x="901.20" y="0" transform="translate(0,895.60) scale(1,0.86)" font-family="Liberation Mono" font-size="26.2" fill="#111" stroke="#111" stroke-width="0.28" letter-spacing="0.000" xml:space="preserve">BRIANA</text>
<text x="744.70" y="0" transform="translate(0,921.70) scale(1,0.86)" font-family="Liberation Mono" font-size="26.2" fill="#111" stroke="#111" stroke-width="0.28" letter-spacing="0.000" xml:space="preserve">Where have you been?</text>
<text x="578.80" y="0" transform="translate(0,973.90) scale(1,0.86)" font-family="Liberation Mono" font-size="26.2" fill="#111" stroke="#111" stroke-width="0.28" letter-spacing="0.000" xml:space="preserve">Briana moves closer, and Sandy&#x27;s appearance sinks in.</text>
<text x="901.20" y="0" transform="translate(0,1026.10) scale(1,0.86)" font-family="Liberation Mono" font-size="26.2" fill="#111" stroke="#111" stroke-width="0.28" letter-spacing="0.000" xml:space="preserve">BRIANA</text>
<text x="744.70" y="0" transform="translate(0,1052.20) scale(1,0.86)" font-family="Liberation Mono" font-size="26.2" fill="#111" stroke="#111" stroke-width="0.28" letter-spacing="0.000" xml:space="preserve">...Where have you been?</text>
<text x="901.20" y="0" transform="translate(0,1104.40) scale(1,0.86)" font-family="Liberation Mono" font-size="26.2" fill="#111" stroke="#111" stroke-width="0.28" letter-spacing="0.000" xml:space="preserve">SANDY</text>
<text x="744.70" y="0" transform="translate(0,1130.50) scale(1,0.86)" font-family="Liberation Mono" font-size="26.2" fill="#111" stroke="#111" stroke-width="0.28" letter-spacing="0.000" xml:space="preserve">Should&#x27;ve stayed in the cab.</text>
</g>
<rect x="1614.10" y="591.70" width="96.20" height="38.10" rx="4.50" fill="#000" stroke="#d3d3d3" stroke-width="3" />
<text x="1662.20" y="618.31" font-family="Liberation Sans" font-size="21" font-weight="700" fill="#d3d3d3" text-anchor="middle" >Clear</text>
<rect x="1614.10" y="647.50" width="96.20" height="38.30" rx="4.50" fill="#000" stroke="#d3d3d3" stroke-width="3" />
<text x="1662.20" y="674.21" font-family="Liberation Sans" font-size="21" font-weight="700" fill="#d3d3d3" text-anchor="middle" >Diff</text>
<rect x="1614.10" y="702.80" width="96.20" height="38.40" rx="4.50" fill="#000" stroke="#d3d3d3" stroke-width="3" />
<text x="1662.20" y="729.56" font-family="Liberation Sans" font-size="21" font-weight="700" fill="#d3d3d3" text-anchor="middle" >Edit</text>
<rect x="63.50" y="1167.50" width="1673.00" height="70.00" rx="2.50" fill="#474747" stroke="#d0d0d0" stroke-width="3" />
<rect x="86.30" y="1178.50" width="153.90" height="46.00" rx="4.50" fill="#8a8a8a" stroke="#d0d0d0" stroke-width="3" />
<text x="163.25" y="1210.50" font-family="Liberation Sans" font-size="25" font-weight="700" fill="#cfcfcf" text-anchor="middle" >Script</text>
<rect x="256.50" y="1178.50" width="154.00" height="46.00" rx="4.50" fill="#000" stroke="#d3d3d3" stroke-width="3" />
<text x="333.50" y="1210.50" font-family="Liberation Sans" font-size="25" font-weight="700" fill="#d3d3d3" text-anchor="middle" >Production</text>
<rect x="659.50" y="1179.50" width="153.50" height="44.60" rx="4.50" fill="#000" stroke="#d3d3d3" stroke-width="3" />
<text x="736.25" y="1210.80" font-family="Liberation Sans" font-size="25" font-weight="700" fill="#d3d3d3" text-anchor="middle" >Characters</text>
<rect x="829.50" y="1179.50" width="153.40" height="44.60" rx="4.50" fill="#000" stroke="#d3d3d3" stroke-width="3" />
<text x="906.20" y="1210.80" font-family="Liberation Sans" font-size="25" font-weight="700" fill="#d3d3d3" text-anchor="middle" >Actors</text>
<rect x="1000.20" y="1179.50" width="153.30" height="44.60" rx="4.50" fill="#000" stroke="#d3d3d3" stroke-width="3" />
<text x="1076.85" y="1210.80" font-family="Liberation Sans" font-size="25" font-weight="700" fill="#d3d3d3" text-anchor="middle" >Reports</text>
<rect x="1388.00" y="1179.50" width="153.50" height="44.00" rx="4.50" fill="#8a8a8a" stroke="#d0d0d0" stroke-width="3" />
<text x="1464.75" y="1210.50" font-family="Liberation Sans" font-size="25" font-weight="700" fill="#cfcfcf" text-anchor="middle" >Last Shot</text>
<rect x="1558.50" y="1179.50" width="153.60" height="44.00" rx="4.50" fill="#8a8a8a" stroke="#d0d0d0" stroke-width="3" />
<text x="1635.30" y="1210.50" font-family="Liberation Sans" font-size="25" font-weight="700" fill="#cfcfcf" text-anchor="middle" >Shot</text>
<rect x="663.00" y="1237.00" width="474.00" height="8.50" rx="4" fill="#ececec" />
<clipPath id="dlgclip"><rect x="679" y="518" width="442" height="228.5" rx="20"/></clipPath>
<g clip-path="url(#dlgclip)">
<rect x="679.00" y="518.00" width="442.00" height="228.50" rx="0" fill="#e5e5e5" />
<rect x="679.00" y="675.00" width="220.50" height="71.50" rx="0" fill="#d9d9d9" />
<rect x="899.50" y="675.00" width="221.50" height="71.50" rx="0" fill="#e8e8e8" />
<rect x="679.00" y="674.30" width="442.00" height="1.20" rx="0" fill="#c4c4c4" />
</g>
<text x="900.40" y="577.00" font-family="Liberation Sans" font-size="26" font-weight="700" fill="#111" text-anchor="middle" textLength="93.80" lengthAdjust="spacing" >Publish</text>
<text x="717.30" y="608.40" font-family="Liberation Sans" font-size="20.5" font-weight="400" fill="#1a1a1a" text-anchor="start" textLength="366.20" lengthAdjust="spacing" >Are you sure you want to upload your</text>
<text x="738.50" y="634.70" font-family="Liberation Sans" font-size="20.5" font-weight="400" fill="#1a1a1a" text-anchor="start" textLength="323.80" lengthAdjust="spacing" >changes and download updates?</text>
<text x="769.00" y="720.80" font-family="Liberation Sans" font-size="26" font-weight="400" fill="#2f7bd8" text-anchor="start" textLength="42.30" lengthAdjust="spacing" >Yes</text>
<text x="994.00" y="720.80" font-family="Liberation Sans" font-size="26" font-weight="400" fill="#2f7bd8" text-anchor="start" textLength="33.30" lengthAdjust="spacing" >No</text></svg>
</body></html>
